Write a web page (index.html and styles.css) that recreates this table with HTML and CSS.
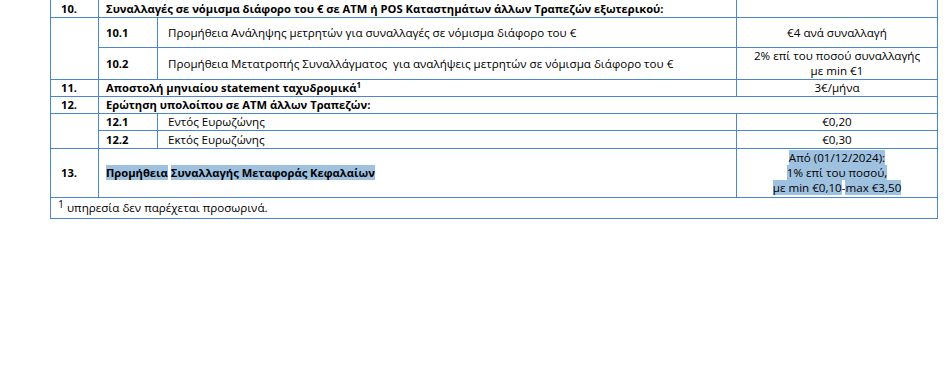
FILE: index.html
```html
<!DOCTYPE html>
<html lang="el">
<head>
<meta charset="utf-8">
<title>Τιμολόγιο</title>
<link rel="stylesheet" href="styles.css">
</head>
<body>
<div class="page">
<table class="fees">
<colgroup>
<col class="c1"><col class="c2"><col class="c3"><col class="c4">
</colgroup>
<tbody>
<tr class="r-top h17">
<td class="num b">10.</td>
<td class="sub b" colspan="2">Συναλλαγές σε νόμισμα διάφορο του € σε ATM ή POS Καταστημάτων άλλων Τραπεζών εξωτερικού:</td>
<td class="val"></td>
</tr>
<tr class="h30">
<td class="num" rowspan="2"></td>
<td class="sub b">10.1</td>
<td class="txt">Προμήθεια Ανάληψης μετρητών για συναλλαγές σε νόμισμα διάφορο του €</td>
<td class="val">€4 ανά συναλλαγή</td>
</tr>
<tr class="h32">
<td class="sub b">10.2</td>
<td class="txt">Προμήθεια Μετατροπής Συναλλάγματος &nbsp;για αναλήψεις μετρητών σε νόμισμα διάφορο του €</td>
<td class="val">2% επί του ποσού συναλλαγής<br>με min €1</td>
</tr>
<tr class="h17">
<td class="num b">11.</td>
<td class="sub b" colspan="2">Αποστολή μηνιαίου statement ταχυδρομικά<sup class="fn">1</sup></td>
<td class="val">3€/μήνα</td>
</tr>
<tr class="h17">
<td class="num b">12.</td>
<td class="sub b" colspan="3">Ερώτηση υπολοίπου σε ATM άλλων Τραπεζών:</td>
</tr>
<tr class="h17">
<td class="num" rowspan="2"></td>
<td class="sub b">12.1</td>
<td class="txt">Εντός Ευρωζώνης</td>
<td class="val">€0,20</td>
</tr>
<tr class="h18">
<td class="sub b">12.2</td>
<td class="txt">Εκτός Ευρωζώνης</td>
<td class="val">€0,30</td>
</tr>
<tr class="h49">
<td class="num b">13.</td>
<td class="sub b" colspan="2"><span class="hl">Προμήθεια</span> <span class="hl">Συναλλαγής Μεταφοράς Κεφαλαίων</span></td>
<td class="val"><span class="hl">Από (01/12/2024):</span><br><span class="hl">1% επί του ποσού,</span><br><span class="hl">με min €0,10</span>-<span class="hl">max €3,50</span></td>
</tr>
<tr class="h21">
<td class="foot" colspan="4"><sup class="fn-big">1</sup> υπηρεσία δεν παρέχεται προσωρινά.</td>
</tr>
</tbody>
</table>
</div>
</body>
</html>
```
FILE: styles.css
```css
html, body {
  margin: 0;
  padding: 0;
  background: #ffffff;
}
body {
  font-family: "Open Sans", "Noto Sans", sans-serif;
  font-size: 11.6px;
  color: #000;
}
.page {
  padding-left: 50px;
}
.fees {
  border-collapse: collapse;
  table-layout: fixed;
  width: 887px;
}
.c1 { width: 48px; }
.c2 { width: 59px; }
.c3 { width: 579px; }
.c4 { width: 201px; }
.fees td {
  border: 1px solid #4a86d4;
  padding: 0;
  vertical-align: middle;
  line-height: 15px;
  white-space: nowrap;
}
.r-top td { border-top: 0; }
.b {
  font-weight: 700;
  font-size: 11.2px;
}
.num { padding-left: 10px !important; }
.sub { padding-left: 7px !important; }
.txt { padding-left: 10px !important; }
.val { text-align: center; }
.h17 { height: 17px; }
.h18 { height: 18px; }
.h21 { height: 21px; }
.h30 { height: 30px; }
.h32 { height: 32px; }
.h49 { height: 49px; }
.hl { background: #9fc1e0; }
.fn {
  font-size: 8px;
  line-height: 0;
  vertical-align: 4px;
}
.fn-big {
  font-size: 10.5px;
  line-height: 0;
  vertical-align: 4px;
}
.foot { padding-left: 7px !important; }
```
